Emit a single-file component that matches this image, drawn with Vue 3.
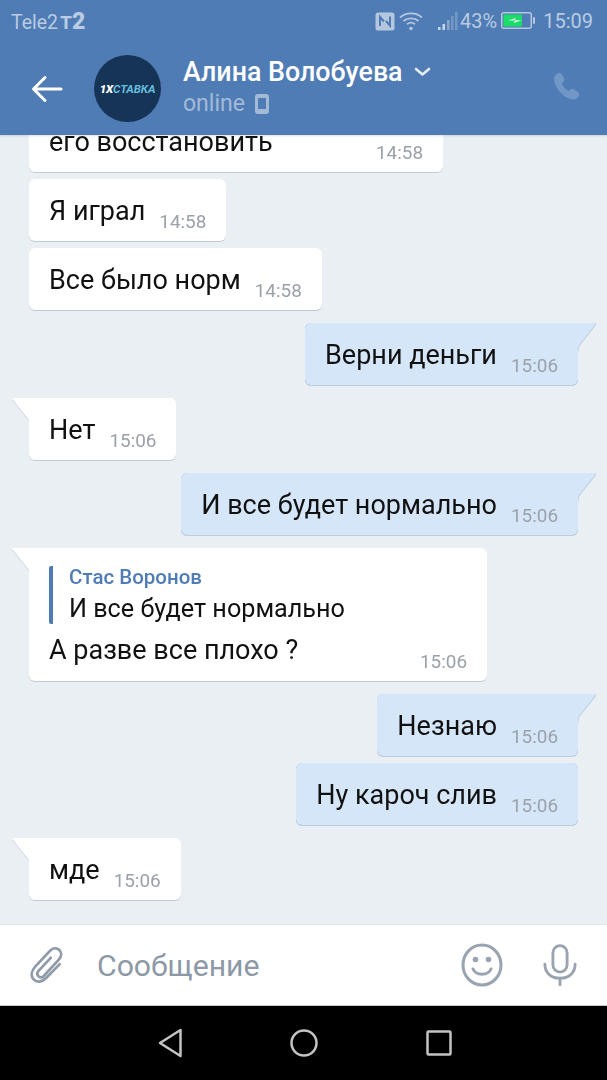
<template>
  <div class="phone">
    <header class="top">
      <div class="status-bar">
        <div class="carrier">Tele2<span class="carrier-t">т</span><b class="carrier-two">2</b></div>
        <div class="status-right">
          <svg class="ic-nfc" width="20" height="19" viewBox="0 0 20 19"><rect width="19" height="18" x="0.5" y="0.5" rx="2.5" fill="#b4c7df"/><path d="M5 14V5l4 4.500M15 4.500v9l-4-4.500" fill="none" stroke="#507cb5" stroke-width="2"/></svg>
          <svg class="ic-wifi" width="24" height="20" viewBox="0 0 24 20" fill="none" stroke="#b4c7df" stroke-width="1.8"><path d="M1 6.500c6-5.500 16-5.500 22 0M4.500 10c4-3.500 11-3.500 15 0M8 13.200c2.300-1.800 5.700-1.800 8 0"/><circle cx="12" cy="17.500" r="1.800" fill="#b4c7df" stroke="none"/></svg>
          <svg class="ic-signal" width="20" height="20" viewBox="0 0 20 20"><rect x="0" y="16" width="2.500" height="3" fill="#c6d5e8"/><rect x="4.500" y="13" width="2.500" height="6" fill="#c6d5e8"/><rect x="9" y="9" width="2.500" height="10" fill="#8aa8ce"/><rect x="13" y="5" width="2.500" height="14" fill="#7497c3"/><rect x="17" y="1" width="2.500" height="18" fill="#7497c3"/></svg>
          <span class="percent">43%</span>
          <svg class="ic-battery" width="34" height="18" viewBox="0 0 34 18"><rect x="0.750" y="0.750" width="29.500" height="15.500" rx="2" fill="none" stroke="#b4c7df" stroke-width="1.500"/><rect x="2.500" y="2.500" width="18.500" height="12" fill="#19dc6a"/><path d="M7 8.500l8-2.500-1.500 2.200H21l-8.500 2.800 1.700-2.500z" fill="#e8f6ee"/><rect x="32" y="5" width="2" height="7" rx="1" fill="#b4c7df"/></svg>
          <span class="clock">15:09</span>
        </div>
      </div>
      <div class="app-bar">
        <svg class="ic-back" width="32" height="28" viewBox="0 0 32 28" fill="none" stroke="#fff" stroke-width="3" stroke-linecap="round" stroke-linejoin="round"><path d="M30 14H3M14 2.500L2.500 14 14 25.500"/></svg>
        <div class="avatar"><span class="logo"><i>1X</i>СТАВКА</span></div>
        <div class="peer">
          <div class="peer-name">
            Алина Волобуева
            <svg width="17" height="10" viewBox="0 0 17 10" fill="none" stroke="#e4ebf4" stroke-width="2.600" stroke-linecap="round" stroke-linejoin="round"><path d="M2 2l6.500 5.500L15 2"/></svg>
          </div>
          <div class="peer-status">
            online
            <svg width="14" height="20" viewBox="0 0 14 20"><path fill-rule="evenodd" fill="#a3bad7" d="M3 0h8a3 3 0 0 1 3 3v14a3 3 0 0 1-3 3H3a3 3 0 0 1-3-3V3a3 3 0 0 1 3-3zM3 4v11h8V4z"/></svg>
          </div>
        </div>
        <svg class="ic-phone" width="30" height="30" viewBox="0 0 30 30"><path fill="#7097c6" d="M6.500 1.500c2-1 3.800-.3 4.800 1.500l1.700 3.300c.7 1.500.3 2.800-.9 3.800l-1.400 1.200c1 2.800 3.900 6.200 6.900 7.700l1.500-1.300c1.100-1 2.500-1.100 3.800-.3l3.700 2.300c1.800 1.200 2.200 3 1 4.700-1.400 2-3.500 3.300-6 3-8.500-1-17.500-11-18.600-19.500-.3-2.600 1-4.800 3.500-6.400z"/></svg>
      </div>
    </header>

    <main class="messages">
      <div
        v-for="m in messages"
        :key="m.id"
        class="row"
        :class="[m.out ? 'out' : 'in', m.gap ? 'gap' : '']"
      >
        <div class="bubble" :class="{ tail: m.tail, reply: m.quote, tall: m.tall }">
          <div v-if="m.quote" class="quote">
            <div class="quote-name">{{ m.quote.name }}</div>
            <div class="quote-text">{{ m.quote.text }}</div>
          </div>
          <div class="line">
            <span class="text">{{ m.text }}</span>
            <span class="time">{{ m.time }}</span>
          </div>
        </div>
      </div>
    </main>

    <footer class="composer">
      <svg class="ic-clip" width="36" height="40" viewBox="0 0 40 42" fill="none" stroke="#8f9ba8" stroke-width="3" stroke-linecap="round" stroke-linejoin="round"><path d="M23 13L9.500 27.500c-1.800 2-1.500 4.500 0 6 1.700 1.600 4 1.500 5.800-.3L32 15c3.300-3.600 3.300-8 .6-10.700-2.800-2.700-7-2.600-10.300.8L6 22.500C1 28 .8 33.500 4 37c3.300 3.500 9 3.500 14-1.600L33 20"/></svg>
      <span class="placeholder">Сообщение</span>
      <svg class="ic-smile" width="42" height="44" viewBox="0 0 42 44" fill="none" stroke="#99a4b0" stroke-width="3"><ellipse cx="21" cy="22" rx="19" ry="20"/><path d="M12 26c3 7 15 7 18 0" stroke-linecap="round"/><circle cx="14.500" cy="16.500" r="2.800" fill="#99a4b0" stroke="none"/><circle cx="27.500" cy="16.500" r="2.800" fill="#99a4b0" stroke="none"/></svg>
      <svg class="ic-mic" width="34" height="44" viewBox="0 0 36 44" fill="none" stroke="#99a4b0" stroke-width="3" stroke-linecap="round"><rect x="10.500" y="1.500" width="15" height="28" rx="7.500"/><path d="M2 21c0 10 7 15 16 15s16-5 16-15M18 36v7"/></svg>
    </footer>

    <nav class="nav-bar">
      <svg width="24" height="30" viewBox="0 0 24 30" fill="none" stroke="#c4c4c4" stroke-width="2.500" stroke-linejoin="round"><path d="M22.500 2L2 15l20.500 13z"/></svg>
      <svg width="28" height="28" viewBox="0 0 28 28" fill="none" stroke="#c4c4c4" stroke-width="2.500"><circle cx="14" cy="14" r="12.500"/></svg>
      <svg width="26" height="26" viewBox="0 0 26 26" fill="none" stroke="#c4c4c4" stroke-width="2.500"><rect x="1.500" y="1.500" width="23" height="23" rx="1"/></svg>
    </nav>
  </div>
</template>

<script setup>
const messages = [
  { id: 1, text: 'его восстановить', time: '14:58', tall: true },
  { id: 2, text: 'Я играл', time: '14:58' },
  { id: 3, text: 'Все было норм', time: '14:58' },
  { id: 4, text: 'Верни деньги', time: '15:06', out: true, tail: true, gap: true },
  { id: 5, text: 'Нет', time: '15:06', tail: true, gap: true },
  { id: 6, text: 'И все будет нормально', time: '15:06', out: true, tail: true, gap: true },
  {
    id: 7,
    text: 'А разве все плохо ?',
    time: '15:06',
    tail: true,
    gap: true,
    quote: { name: 'Стас Воронов', text: 'И все будет нормально' },
  },
  { id: 8, text: 'Незнаю', time: '15:06', out: true, tail: true, gap: true },
  { id: 9, text: 'Ну кароч слив', time: '15:06', out: true },
  { id: 10, text: 'мде', time: '15:06', tail: true, gap: true },
]
</script>

<style>
html, body { margin: 0; padding: 0; background: #eaeff4; }
</style>

<style scoped>
.phone { width: 607px; height: 1080px; display: flex; flex-direction: column; overflow: hidden; background: #eaeff4; font-family: Roboto, "Noto Sans", sans-serif; }

.top { flex: none; height: 135px; background: #507cb5; position: relative; z-index: 2; box-shadow: 0 1px 2px rgba(0,0,0,.12); }
.status-bar { height: 42px; box-sizing: border-box; padding: 0 14px 0 11px; display: flex; align-items: center; justify-content: space-between; color: #b9cbe2; font-size: 19.500px; }
.carrier { display: flex; align-items: baseline; }
.carrier-t { font-size: 24px; font-weight: 500; margin-left: 2px; }
.carrier-two { font-size: 23px; font-weight: 900; }
.status-right { display: flex; align-items: center; }
.ic-nfc { margin-right: 4px; }
.ic-wifi { margin-right: 15px; }
.ic-signal { margin-right: 2px; }
.percent { font-size: 20px; margin-right: 4px; }
.ic-battery { margin-right: 8px; }
.clock { font-size: 20px; }

.app-bar { height: 93px; display: flex; align-items: center; padding: 0 26px 0 31px; box-sizing: border-box; }
.ic-back { flex: none; margin-right: 31px; }
.avatar { flex: none; width: 67px; height: 67px; border-radius: 50%; background: #163456; display: flex; align-items: center; justify-content: center; margin-right: 22px; }
.logo { font-size: 11.500px; font-weight: 700; font-style: italic; color: #67bfdf; letter-spacing: -.1px; }
.logo i { color: #fff; font-weight: 900; }
.peer { flex: 1; display: flex; flex-direction: column; gap: 3px; margin-top: -2px; }
.peer-name { color: #fff; font-size: 26.800px; font-weight: 500; line-height: 30px; display: flex; align-items: center; gap: 11px; }
.peer-status { color: #a3bad7; font-size: 23px; line-height: 28px; display: flex; align-items: center; gap: 10px; }
.ic-phone { flex: none; margin-top: -3px; }

.messages { flex: 1; min-height: 0; overflow: hidden; display: flex; flex-direction: column; justify-content: flex-end; padding: 0 29px 24px; }
.row { display: flex; margin-top: 7px; flex: none; }
.row.gap { margin-top: 13px; }
.row.in { justify-content: flex-start; }
.row.out { justify-content: flex-end; }

.bubble { position: relative; box-sizing: border-box; min-height: 62px; padding: 0 20px; border-radius: 6px; display: flex; flex-direction: column; justify-content: center; filter: drop-shadow(0 1px .5px rgba(110,135,165,.35)); }
.in .bubble { background: #fff; }
.out .bubble { background: #d6e6f9; filter: drop-shadow(0 0 .6px rgba(80,120,170,.55)) drop-shadow(0 1px .5px rgba(90,125,170,.3)); }
.bubble.tall { width: 414px; }
.bubble.tail::before { content: ""; position: absolute; top: 0; width: 18px; height: 30px; }
.in .bubble.tail { border-top-left-radius: 0; }
.out .bubble.tail { border-top-right-radius: 0; }
.in .bubble.tail::before { left: -17px; background: #fff; clip-path: path("M18 0H1.500Q-.5 0 .5 1.500L16 21Q18 24 18 30Z"); }
.out .bubble.tail::before { right: -18px; background: #d6e6f9; clip-path: path("M0 0H16.500Q18.500 0 17.500 1.500L2 21Q0 24 0 30Z"); }

.line { display: flex; align-items: baseline; justify-content: space-between; gap: 14px; }
.text { font-size: 27px; line-height: 32px; color: #111; transform: translateY(1px); }
.time { font-size: 18.900px; color: #9aa1a9; transform: translateY(9px); }

.bubble.reply { width: 458px; height: 133px; justify-content: flex-start; padding-top: 18px; }
.bubble.reply .time { transform: translateY(10px); }
.quote { border-left: 4px solid #507cb5; border-radius: 2px; padding-left: 16px; height: 58px; box-sizing: border-box; margin-bottom: 9px; display: flex; flex-direction: column; justify-content: space-between; }
.quote-name { color: #507cb5; font-size: 20.500px; font-weight: 500; line-height: 22px; }
.quote-text { color: #111; font-size: 25.200px; line-height: 30px; }

.composer { flex: none; background: #fff; border-top: 1px solid #e2e6ea; border-bottom: 1px solid #c8c8c8; height: 80px; display: flex; align-items: center; padding: 0 30px; }
.ic-clip { flex: none; margin-right: 31px; }
.placeholder { flex: 1; color: #8d99a6; font-size: 30.200px; }
.ic-smile { flex: none; margin-right: 40px; }
.ic-mic { flex: none; }

.nav-bar { flex: none; height: 74px; background: #000; display: flex; align-items: center; padding-left: 158px; gap: 108px; }
</style>
